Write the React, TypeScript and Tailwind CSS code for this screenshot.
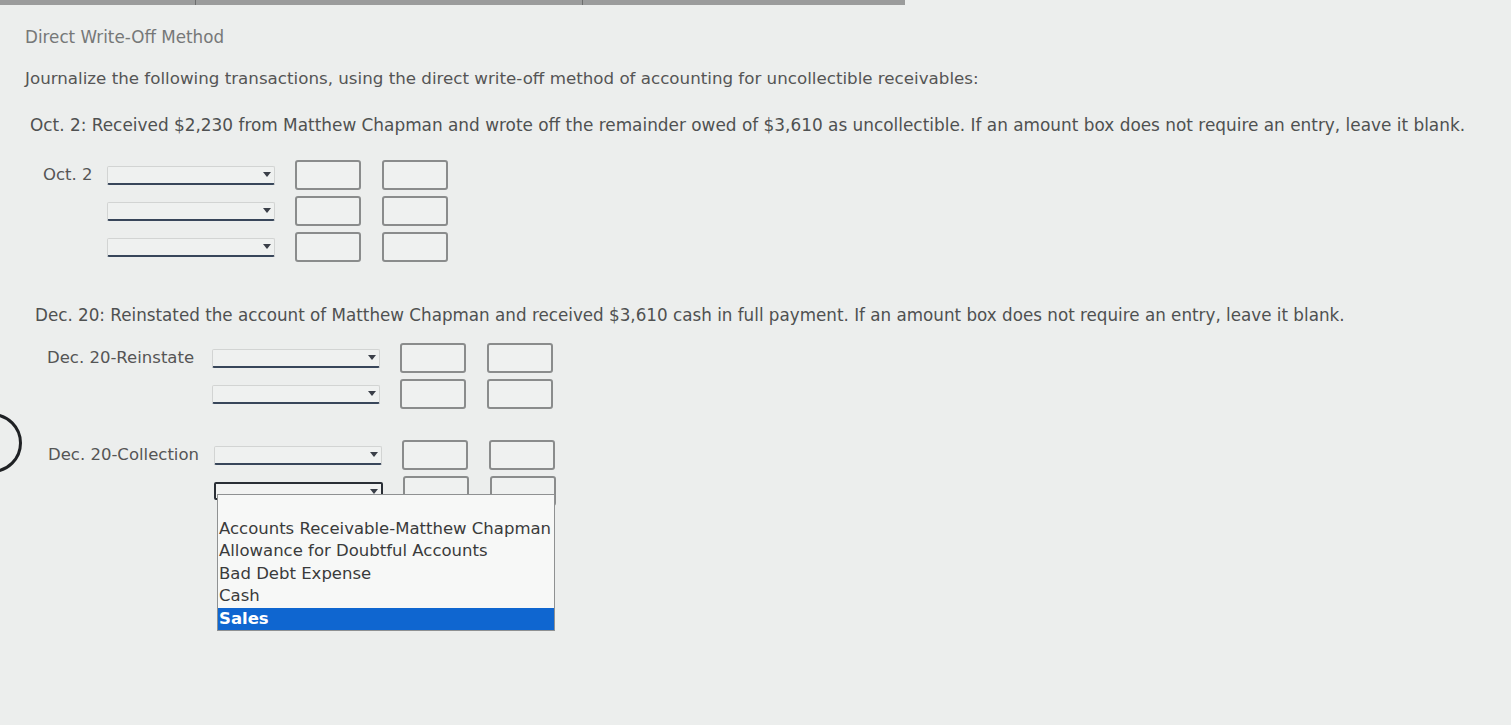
import React from "react";

function Select({ focused = false }: { focused?: boolean }) {
  return (
    <div
      className={
        focused
          ? "relative h-[18px] w-[169px] rounded-[2px] border-2 border-[#2a2f36] bg-[#f2f3f2]"
          : "relative h-[19px] w-[168px] rounded-[2px] border border-b-2 border-[#d2d4d3] border-b-[#38465a] bg-[#eff1f0]"
      }
    >
      <div className="absolute right-[3px] top-[5px] h-0 w-0 border-l-[4px] border-r-[4px] border-t-[5px] border-l-transparent border-r-transparent border-t-[#3a3f48]" />
    </div>
  );
}

function Box() {
  return <div className="h-[30px] w-[66px] rounded-[3px] border-2 border-[#8a8c8c] bg-[#eff1f0]" />;
}

function Row({ label, labelW, focused = false, children }: { label?: string; labelW: number; focused?: boolean; children?: React.ReactNode }) {
  return (
    <div className="flex items-center">
      <div style={{ width: labelW }} className="whitespace-nowrap text-[16.5px] text-[#555]">
        {label}
      </div>
      <div className="relative">
        <Select focused={focused} />
        {children}
      </div>
      <div className="ml-[20px] flex gap-[21px]">
        <Box />
        <Box />
      </div>
    </div>
  );
}

const options = [
  "",
  "Accounts Receivable-Matthew Chapman",
  "Allowance for Doubtful Accounts",
  "Bad Debt Expense",
  "Cash",
  "Sales",
];

export default function App() {
  return (
    <div className="relative h-[725px] w-[1511px] overflow-hidden bg-[#eceeed] font-['DejaVu_Sans',sans-serif] text-[#555]">
      <div className="absolute left-0 top-0 flex h-[5px] w-[905px] bg-[#9b9c9c]">
        <div className="w-[196px] border-r border-[#6d6e6e]" />
        <div className="w-[387px] border-r border-[#6d6e6e]" />
      </div>
      <div className="absolute left-[-38px] top-[413px] h-[60px] w-[60px] rounded-full border-[3px] border-[#1f2124]" />

      <div className="pl-[25px] pt-[27px]">
        <div className="text-[16.75px] leading-[20px] text-[#767878]">Direct Write-Off Method</div>
        <div className="mt-[21px] text-[16.7px] leading-[20px] text-[#555]">
          Journalize the following transactions, using the direct write-off method of accounting for uncollectible receivables:
        </div>
        <div className="ml-[5px] mt-[26px] whitespace-nowrap text-[16.9px] leading-[22px] text-[#4f5151]">
          Oct. 2: Received $2,230 from Matthew Chapman and wrote off the remainder owed of $3,610 as uncollectible. If an amount box does not require an entry, leave it blank.
        </div>

        <div className="ml-[18px] mt-[24px] flex flex-col gap-[6px]">
          <Row label="Oct. 2" labelW={64} />
          <Row labelW={64} />
          <Row labelW={64} />
        </div>

        <div className="ml-[10px] mt-[42px] whitespace-nowrap text-[16.75px] leading-[22px] text-[#4f5151]">
          Dec. 20: Reinstated the account of Matthew Chapman and received $3,610 cash in full payment. If an amount box does not require an entry, leave it blank.
        </div>

        <div className="ml-[22px] mt-[17px] flex flex-col gap-[6px]">
          <Row label="Dec. 20-Reinstate" labelW={165} />
          <Row labelW={165} />
        </div>

        <div className="ml-[23px] mt-[31px] flex flex-col gap-[6px]">
          <Row label="Dec. 20-Collection" labelW={166} />
          <Row labelW={166} focused>
            <div className="absolute left-[3px] top-[12px] z-10 w-[338px] border border-[#8f9192] bg-[#f7f8f7] text-[16.5px] leading-[22.5px] text-[#3a3b3b]">
              {options.map((o, i) =>
                o === "Sales" ? (
                  <div key={i} className="h-[22.5px] whitespace-nowrap bg-[#0f66d0] pl-[1px] font-bold text-white">
                    {o}
                  </div>
                ) : (
                  <div key={i} className="h-[22.5px] whitespace-nowrap pl-[1px]">
                    {o}
                  </div>
                )
              )}
            </div>
          </Row>
        </div>
      </div>
    </div>
  );
}
